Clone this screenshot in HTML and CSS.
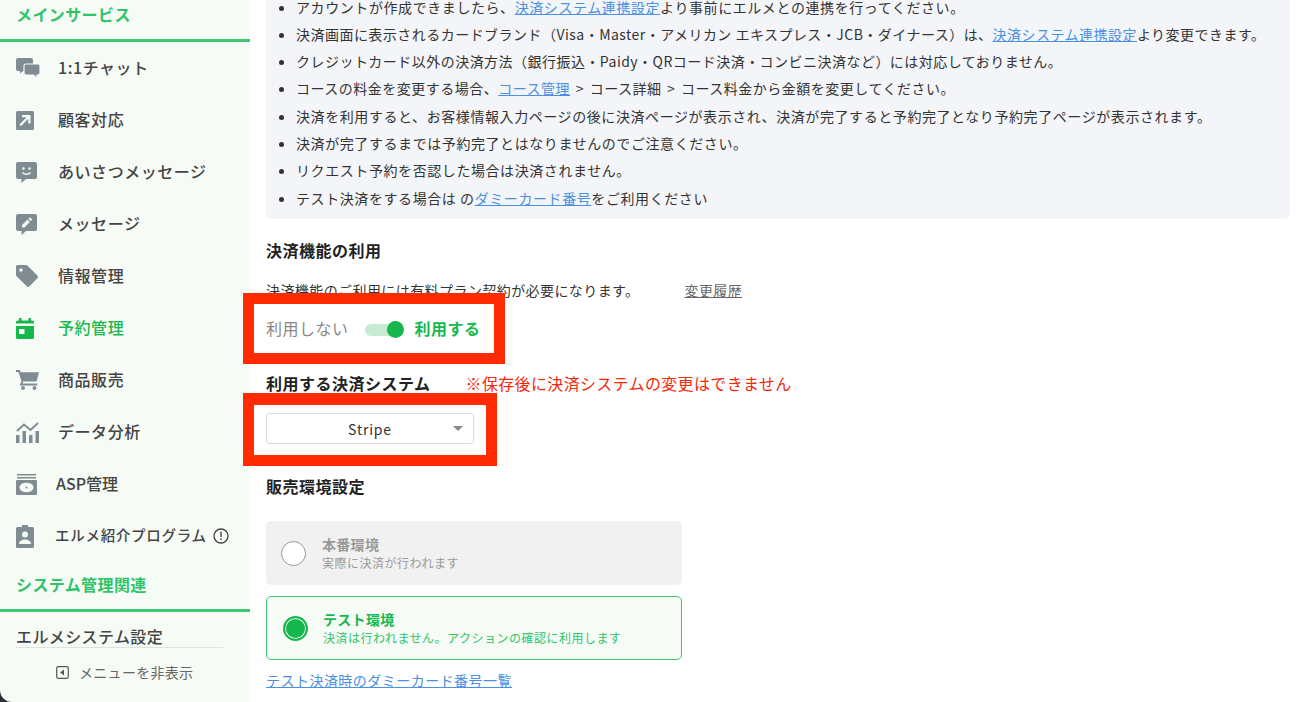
FILE: index.html
```html
<!DOCTYPE html>
<html lang="ja">
<head>
<meta charset="utf-8">
<title>決済機能の利用</title>
<link rel="stylesheet" href="styles.css">
</head>
<body>
<div class="app">
  <div class="side-wrap">
    <aside class="sidebar">
      <div class="sec-head first">メインサービス</div>
      <nav>
        <a class="item"><span class="ico"><svg width="24" height="21" viewBox="0 0 24 21"><path class="g" d="M2 0h13a2 2 0 0 1 2 2v9a2 2 0 0 1-2 2H7l-3 2.500V13H2a2 2 0 0 1-2-2V2a2 2 0 0 1 2-2z"/><path class="g cut" d="M10 6h12a2 2 0 0 1 2 2v7a2 2 0 0 1-2 2h-1v3.500L17.500 17H10a2 2 0 0 1-2-2V8a2 2 0 0 1 2-2z"/></svg></span><span class="label">1:1チャット</span></a>
        <a class="item"><span class="ico"><svg width="18" height="19" viewBox="0 0 18 19"><rect class="g" width="18" height="19" rx="1.500"/><path class="w" d="M6 4h8.500v8.500h-2.200V7.800L5 15l-1.500-1.500 7.200-7.300H6z"/></svg></span><span class="label">顧客対応</span></a>
        <a class="item"><span class="ico"><svg width="21" height="21" viewBox="0 0 21 21"><path class="g" d="M2 0h17a2 2 0 0 1 2 2v13a2 2 0 0 1-2 2H10l-4.500 4v-4H2a2 2 0 0 1-2-2V2a2 2 0 0 1 2-2z"/><circle class="w" cx="7.500" cy="6.500" r="1.200"/><circle class="w" cx="13.500" cy="6.500" r="1.200"/><path class="wl" d="M6.500 10.500c2 2.300 6 2.300 8 0"/></svg></span><span class="label">あいさつメッセージ</span></a>
        <a class="item"><span class="ico"><svg width="21" height="21" viewBox="0 0 21 21"><path class="g" d="M2 0h17a2 2 0 0 1 2 2v13a2 2 0 0 1-2 2H10l-4.500 4v-4H2a2 2 0 0 1-2-2V2a2 2 0 0 1 2-2z"/><path class="w" d="M6 13.500v-2.400l5.500-5.500 2.400 2.400L8.400 13.500zM12.400 4.700l1-1a.7.7 0 0 1 1 0l1.400 1.400a.7.7 0 0 1 0 1l-1 1z"/></svg></span><span class="label">メッセージ</span></a>
        <a class="item"><span class="ico"><svg width="22" height="22" viewBox="0 0 22 22"><path class="g" d="M1.500 0H10a2 2 0 0 1 1.400.6l9.900 9.900a2 2 0 0 1 0 2.800l-7.700 7.900a2 2 0 0 1-2.800 0L.6 11.300A2 2 0 0 1 0 9.900V1.500A1.500 1.500 0 0 1 1.500 0zM5 3.300a1.700 1.700 0 1 0 0 3.400 1.700 1.700 0 0 0 0-3.400z" fill-rule="evenodd"/></svg></span><span class="label">情報管理</span></a>
        <a class="item active"><span class="ico"><svg width="18" height="21" viewBox="0 0 18 21"><path class="gr" d="M3 0h2.500v2.500h7V0H15v2.500h1.500A1.500 1.500 0 0 1 18 4v15.500a1.500 1.500 0 0 1-1.500 1.500h-15A1.500 1.500 0 0 1 0 19.500V4a1.500 1.500 0 0 1 1.500-1.500H3z"/><rect class="bgfill" x="0" y="5.500" width="18" height="2.500"/><rect class="bgfill" x="3" y="11" width="5.500" height="5"/></svg></span><span class="label">予約管理</span></a>
        <a class="item"><span class="ico"><svg width="23" height="20" viewBox="0 0 23 20"><path class="g" d="M0 0h3.800l.9 2.200H23l-2.500 9.300H7.300l-.9 1.900h14.800v2H3.500l2-4.100L2.500 2H0z"/><circle class="g" cx="7" cy="18" r="2"/><circle class="g" cx="18.500" cy="18" r="2"/></svg></span><span class="label">商品販売</span></a>
        <a class="item"><span class="ico"><svg width="23" height="21" viewBox="0 0 23 21"><rect class="g" x="0" y="13" width="3.500" height="8"/><rect class="g" x="6.500" y="9" width="3.500" height="12"/><rect class="g" x="13" y="13" width="3.500" height="8"/><rect class="g" x="19.500" y="9" width="3.500" height="12"/><path class="gl" d="M1 9l7-6.500 6.500 5.500L22 1"/></svg></span><span class="label">データ分析</span></a>
        <a class="item tight"><span class="ico"><svg width="21" height="21" viewBox="0 0 21 21"><rect class="g" x="1" y="0" width="19" height="1.500"/><rect class="g" x="1" y="3" width="19" height="1.500"/><path class="g" d="M1 6h19a1 1 0 0 1 1 1v13a1 1 0 0 1-1 1H1a1 1 0 0 1-1-1V7a1 1 0 0 1 1-1z"/><ellipse class="w" cx="10.500" cy="13.500" rx="7" ry="4.800"/><circle class="g" cx="10.500" cy="13.500" r="1"/></svg></span><span class="label plain">ASP管理</span></a>
        <a class="item tight small"><span class="ico"><svg width="18" height="23" viewBox="0 0 18 23"><path class="g" d="M1.500 2H6V0h6v2h4.500A1.500 1.500 0 0 1 18 3.500v18a1.500 1.500 0 0 1-1.500 1.500h-15A1.500 1.500 0 0 1 0 21.500v-18A1.500 1.500 0 0 1 1.500 2z"/><circle class="w" cx="9" cy="9.500" r="3"/><path class="w" d="M3 19c0-3 3-4.500 6-4.500s6 1.500 6 4.500z"/></svg></span><span class="label">エルメ紹介プログラム</span><svg class="info" width="16" height="16" viewBox="0 0 16 16"><circle cx="8" cy="8" r="7" fill="none" stroke="#444" stroke-width="1.300"/><rect x="7.300" y="3.600" width="1.400" height="5.400" fill="#444"/><rect x="7.300" y="10.400" width="1.400" height="1.600" fill="#444"/></svg></a>
      </nav>
      <div class="sec-head second">システム管理関連</div>
      <div class="sys-title">エルメシステム設定</div>
      <div class="hide-menu"><svg width="13" height="13" viewBox="0 0 13 13"><rect x=".7" y=".7" width="11.600" height="11.600" rx="1.500" fill="none" stroke="#555" stroke-width="1.200"/><path d="M8 3.500v6L4 6.500z" fill="#555"/></svg><span>メニューを非表示</span></div>
    </aside>
  </div>
  <main class="main">
    <ul class="notes">
      <li>アカウントが作成できましたら、<a class="lnk">決済システム連携設定</a>より事前にエルメとの連携を行ってください。</li>
      <li class="mixed">決済画面に表示されるカードブランド（Visa・Master・アメリカン エキスプレス・JCB・ダイナース）は、<a class="lnk">決済システム連携設定</a>より変更できます。</li>
      <li class="mixed">クレジットカード以外の決済方法（銀行振込・Paidy・QRコード決済・コンビニ決済など）には対応しておりません。</li>
      <li class="spaced">コースの料金を変更する場合、<a class="lnk">コース管理</a> &gt; コース詳細 &gt; コース料金から金額を変更してください。</li>
      <li>決済を利用すると、お客様情報入力ページの後に決済ページが表示され、決済が完了すると予約完了となり予約完了ページが表示されます。</li>
      <li>決済が完了するまでは予約完了とはなりませんのでご注意ください。</li>
      <li>リクエスト予約を否認した場合は決済されません。</li>
      <li>テスト決済をする場合は の<a class="lnk">ダミーカード番号</a>をご利用ください</li>
    </ul>
    <h2 class="title t1">決済機能の利用</h2>
    <div class="plan-row"><span>決済機能のご利用には有料プラン契約が必要になります。</span><a class="history">変更履歴</a></div>
    <div class="toggle-row">
      <span class="off">利用しない</span>
      <span class="switch"><span class="knob"></span></span>
      <span class="on">利用する</span>
    </div>
    <div class="sys-row"><h2 class="title">利用する決済システム</h2><span class="warn">※保存後に決済システムの変更はできません</span></div>
    <div class="select"><span>Stripe</span><i class="caret"></i></div>
    <h2 class="title t3">販売環境設定</h2>
    <div class="card disabled">
      <span class="radio"></span>
      <div><div class="card-t">本番環境</div><div class="card-s">実際に決済が行われます</div></div>
    </div>
    <div class="card selected">
      <span class="radio"></span>
      <div><div class="card-t">テスト環境</div><div class="card-s">決済は行われません。アクションの確認に利用します</div></div>
    </div>
    <a class="lnk dummy">テスト決済時のダミーカード番号一覧</a>
    <div class="mark m1"></div>
    <div class="mark m2"></div>
  </main>
</div>
</body>
</html>
```

FILE: styles.css
```css
* { box-sizing: border-box; }
html, body { margin: 0; height: 100%; overflow: hidden; background: #fff; }
body { font-family: "Noto Sans CJK JP", "Noto Sans", sans-serif; color: #333; }
.app { display: flex; height: 702px; }
.side-wrap { width: 250px; flex: none; background: #2b3035; }
.sidebar { height: 100%; background: #f6fbf6; border-bottom-left-radius: 12px; display: flex; flex-direction: column; overflow: hidden; }
.sec-head { color: #2fc46a; font-size: 16px; font-weight: 700; line-height: 24px; letter-spacing: .4px; padding-left: 16px; border-bottom: 3px solid #3dc873; }
.sec-head.first { height: 42px; padding-top: 2px; }
.sec-head.second { height: 50px; padding-top: 10px; }
.item { height: 52px; display: flex; align-items: center; padding-left: 16px; font-size: 16px; font-weight: 500; color: #444; letter-spacing: .55px; }
.item .ico { width: 26px; margin-right: 16px; display: flex; align-items: center; flex: none; }
.item .label { padding-bottom: 3px; }
.item.tight .ico { margin-right: 14px; }
.item.small { font-size: 14.500px; letter-spacing: .72px; }
.item.small .ico { margin-right: 13px; }
.item.tight .plain { letter-spacing: 0; }
.item.active { color: #16b84e; }
.info { margin-left: 6px; }
.g { fill: #7f8c92; }
.cut { stroke: #f6fbf6; stroke-width: 1.200px; }
.w { fill: #f6fbf6; }
.wl { fill: none; stroke: #f6fbf6; stroke-width: 1.300px; }
.gl { fill: none; stroke: #7f8c92; stroke-width: 1.800px; }
.gr { fill: #16b84e; }
.bgfill { fill: #f6fbf6; }
.sys-title { margin: 14px 27px 0 16px; height: 22px; line-height: 20px; font-size: 16px; font-weight: 500; color: #444; letter-spacing: .4px; border-bottom: 1px solid #dde3de; white-space: nowrap; }
.hide-menu { display: flex; align-items: center; gap: 10px; margin: 14px 0 0 56px; font-size: 14px; color: #666; line-height: 20px; letter-spacing: .3px; }
.main { position: relative; flex: 1; padding: 0 17px 0 16px; min-width: 0; }
.notes { margin: 0; padding: 0 0 7px 30px; height: 219px; background: #f4f5f8; border-radius: 0 0 5px 5px; list-style: disc; font-size: 14px; line-height: 27.300px; letter-spacing: .58px; color: #333; }
.notes li { position: relative; top: -6.500px; white-space: nowrap; }
.notes .mixed { letter-spacing: .47px; }
.notes .spaced { word-spacing: 2px; letter-spacing: .5px; }
.lnk { color: #4a90e2; text-decoration: underline; }
.title { margin: 0; font-size: 16px; font-weight: 700; color: #222; line-height: 24px; letter-spacing: .5px; }
.t1 { margin-top: 19px; }
.plan-row { margin-top: 17px; font-size: 14px; line-height: 22px; letter-spacing: .42px; display: flex; color: #333; }
.history { margin-left: 45px; color: #666; text-decoration: underline; }
.toggle-row { margin-top: 14px; display: flex; align-items: center; height: 26px; font-size: 16px; letter-spacing: .5px; }
.off { color: #888; }
.switch { position: relative; width: 31px; height: 12px; margin: 3px 19px 0 16px; background: #c5ebd0; border-radius: 6px; }
.knob { position: absolute; right: -8px; top: -3px; width: 17px; height: 17px; background: #16b84e; border-radius: 50%; }
.on { color: #16b84e; font-weight: 700; }
.sys-row { margin-top: 30px; display: flex; align-items: center; height: 24px; }
.warn { margin-left: 35px; color: #f5280a; font-size: 16px; letter-spacing: .35px; }
.select { position: relative; margin-top: 18px; width: 208px; height: 31px; background: #fff; border: 1px solid #dcdcdc; border-radius: 3px; display: flex; align-items: center; justify-content: center; font-size: 14px; letter-spacing: .8px; color: #333; }
.caret { position: absolute; right: 10px; top: 12px; width: 0; height: 0; border-left: 5px solid transparent; border-right: 5px solid transparent; border-top: 5px solid #888; }
.t3 { margin-top: 30px; }
.card { margin-top: 11px; width: 416px; height: 64px; border-radius: 5px; display: flex; align-items: center; padding-left: 15px; }
.t3 + .card { margin-top: 23px; }
.card-t { font-size: 14px; font-weight: 700; line-height: 20px; letter-spacing: .3px; }
.card-s { font-size: 12px; line-height: 18px; letter-spacing: .5px; }
.radio { width: 25px; height: 25px; border-radius: 50%; margin-right: 16px; flex: none; }
.disabled { background: #f1f1f1; color: #999; }
.disabled .radio { background: #fff; border: 1px solid #999; }
.selected { background: #f6fbf6; border: 1px solid #3dc873; color: #16b84e; padding-left: 16px; }
.selected .radio { background: #16b84e; border: 2px solid #16b84e; box-shadow: inset 0 0 0 1px #fff; margin-right: 15px; }
.selected .card-s { color: #2fc46a; }
.dummy { display: block; margin-top: 9px; font-size: 14px; line-height: 22px; letter-spacing: .47px; width: max-content; }
.mark { position: absolute; border: 11px solid #ff2a00; }
.m1 { left: -7px; top: 293px; width: 262px; height: 71px; }
.m2 { left: -7px; top: 393px; width: 254px; height: 73px; border-width: 12px 11px 11px; }
```
